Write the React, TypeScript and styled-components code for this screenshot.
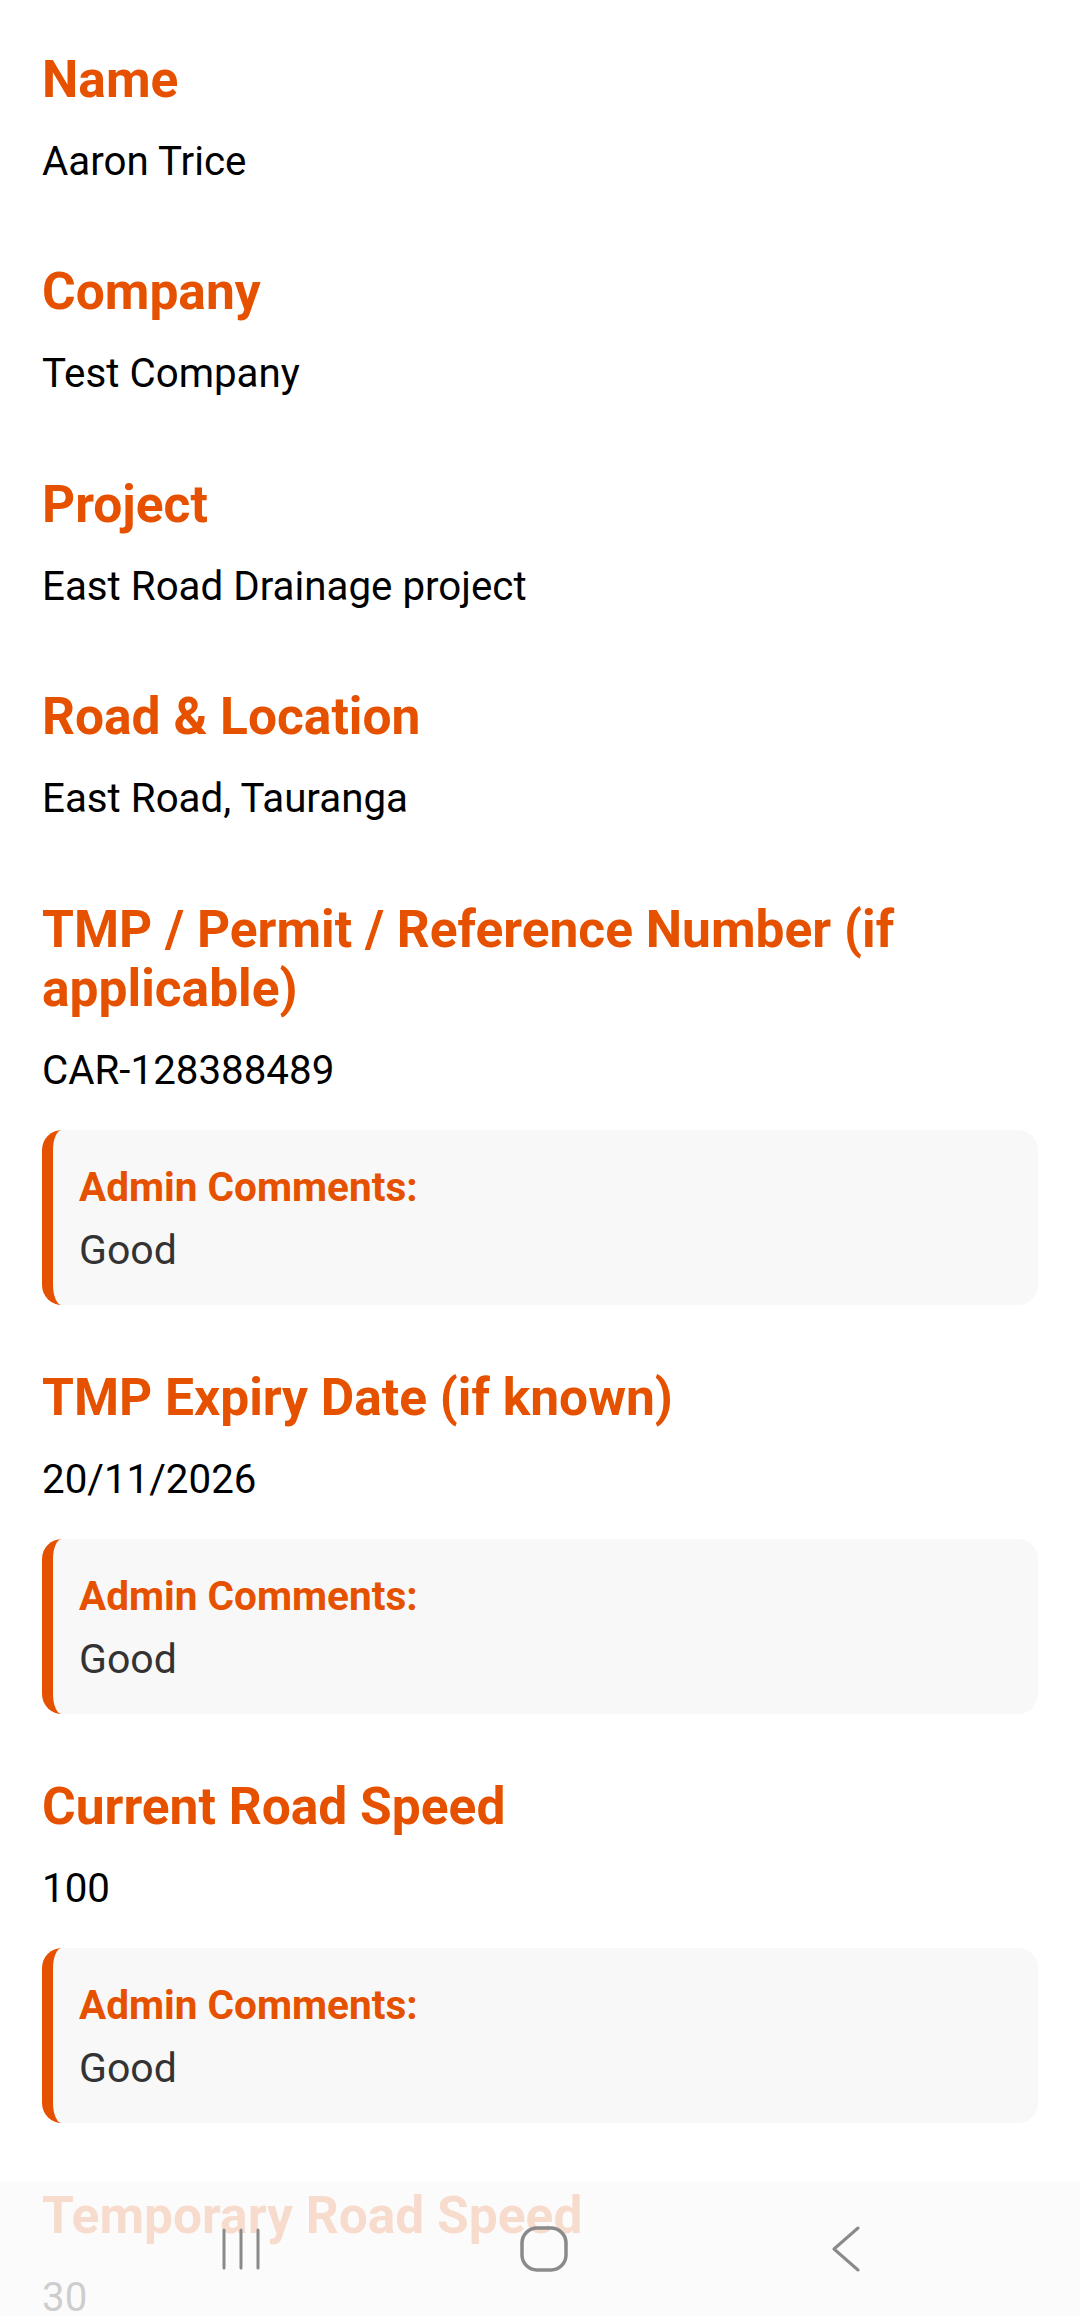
import React from 'react';
import styled, { createGlobalStyle } from 'styled-components';

const ORANGE = '#E65100';

const GlobalStyle = createGlobalStyle`
  html, body {
    margin: 0;
    padding: 0;
    background: #fff;
    font-family: Roboto, "Noto Sans", "Liberation Sans", sans-serif;
  }
  * { box-sizing: border-box; }
`;

const Page = styled.div`
  padding: 49.5px 42px 200px;
`;

interface FieldProps { $hasComment: boolean };
const Field = styled.section`
  display: flex;
  flex-direction: column;
  padding-bottom: ${(p: FieldProps) => p.$hasComment ? '63px' : '77.5px'};
`;

const Heading = styled.h2`
  margin: 0;
  color: ${ORANGE};
  font-size: 51.5px;
  font-weight: 700;
  line-height: 59px;
`;

const Value = styled.div`
  margin-top: 29px;
  color: #000;
  font-size: 40.3px;
  line-height: 47px;
`;

const Comment = styled.div`
  margin-top: 36px;
  background: #f8f8f8;
  border-left: 11px solid ${ORANGE};
  border-radius: 20px;
  padding: 34px 26px 31px;
`;

const CommentLabel = styled.div`
  color: ${ORANGE};
  font-size: 40.5px;
  font-weight: 700;
  line-height: 46px;
`;

const CommentText = styled.div`
  margin-top: 17px;
  color: #333;
  font-size: 41px;
  line-height: 47px;
`;

const NavBar = styled.nav`
  position: fixed;
  left: 0;
  right: 0;
  bottom: 0;
  height: 135px;
  background: rgba(250, 250, 250, 0.82);
`;

interface SlotProps { $center: number };
const NavSlot = styled.div`
  position: absolute;
  top: 0;
  bottom: 0;
  left: ${(p: SlotProps) => p.$center - 40}px;
  width: 80px;
  display: flex;
  align-items: center;
  justify-content: center;
`;

interface Item { label: string; value: string; comment?: string };

const items: Item[] = [
  { label: 'Name', value: 'Aaron Trice' },
  { label: 'Company', value: 'Test Company' },
  { label: 'Project', value: 'East Road Drainage project' },
  { label: 'Road & Location', value: 'East Road, Tauranga' },
  { label: 'TMP / Permit / Reference Number (if applicable)', value: 'CAR-128388489', comment: 'Good' },
  { label: 'TMP Expiry Date (if known)', value: '20/11/2026', comment: 'Good' },
  { label: 'Current Road Speed', value: '100', comment: 'Good' },
  { label: 'Temporary Road Speed', value: '30', comment: 'Good' },
];

const RecentsIcon = () => (
  <svg width="42" height="44" viewBox="0 0 42 44" fill="none" stroke="#8a8a8a" strokeWidth="3" strokeLinecap="round">
    <line x1="4" y1="3" x2="4" y2="41" />
    <line x1="21" y1="3" x2="21" y2="41" />
    <line x1="38" y1="3" x2="38" y2="41" />
  </svg>
);

const HomeIcon = () => (
  <svg width="48" height="46" viewBox="0 0 48 46" fill="none" stroke="#8a8a8a" strokeWidth="3.5">
    <rect x="2" y="2" width="44" height="42" rx="15" />
  </svg>
);

const BackIcon = () => (
  <svg width="30" height="46" viewBox="0 0 30 46" fill="none" stroke="#8a8a8a" strokeWidth="3" strokeLinecap="round" strokeLinejoin="round">
    <polyline points="27,2 3,23 27,44" />
  </svg>
);

const App = () => (
  <>
    <GlobalStyle />
    <Page>
      {items.map(item => (
        <Field key={item.label} $hasComment={!!item.comment}>
          <Heading>{item.label}</Heading>
          <Value>{item.value}</Value>
          {item.comment && (
            <Comment>
              <CommentLabel>Admin Comments:</CommentLabel>
              <CommentText>{item.comment}</CommentText>
            </Comment>
          )}
        </Field>
      ))}
    </Page>
    <NavBar>
      <NavSlot $center={241}><RecentsIcon /></NavSlot>
      <NavSlot $center={544}><HomeIcon /></NavSlot>
      <NavSlot $center={846}><BackIcon /></NavSlot>
    </NavBar>
  </>
);

export default App;
